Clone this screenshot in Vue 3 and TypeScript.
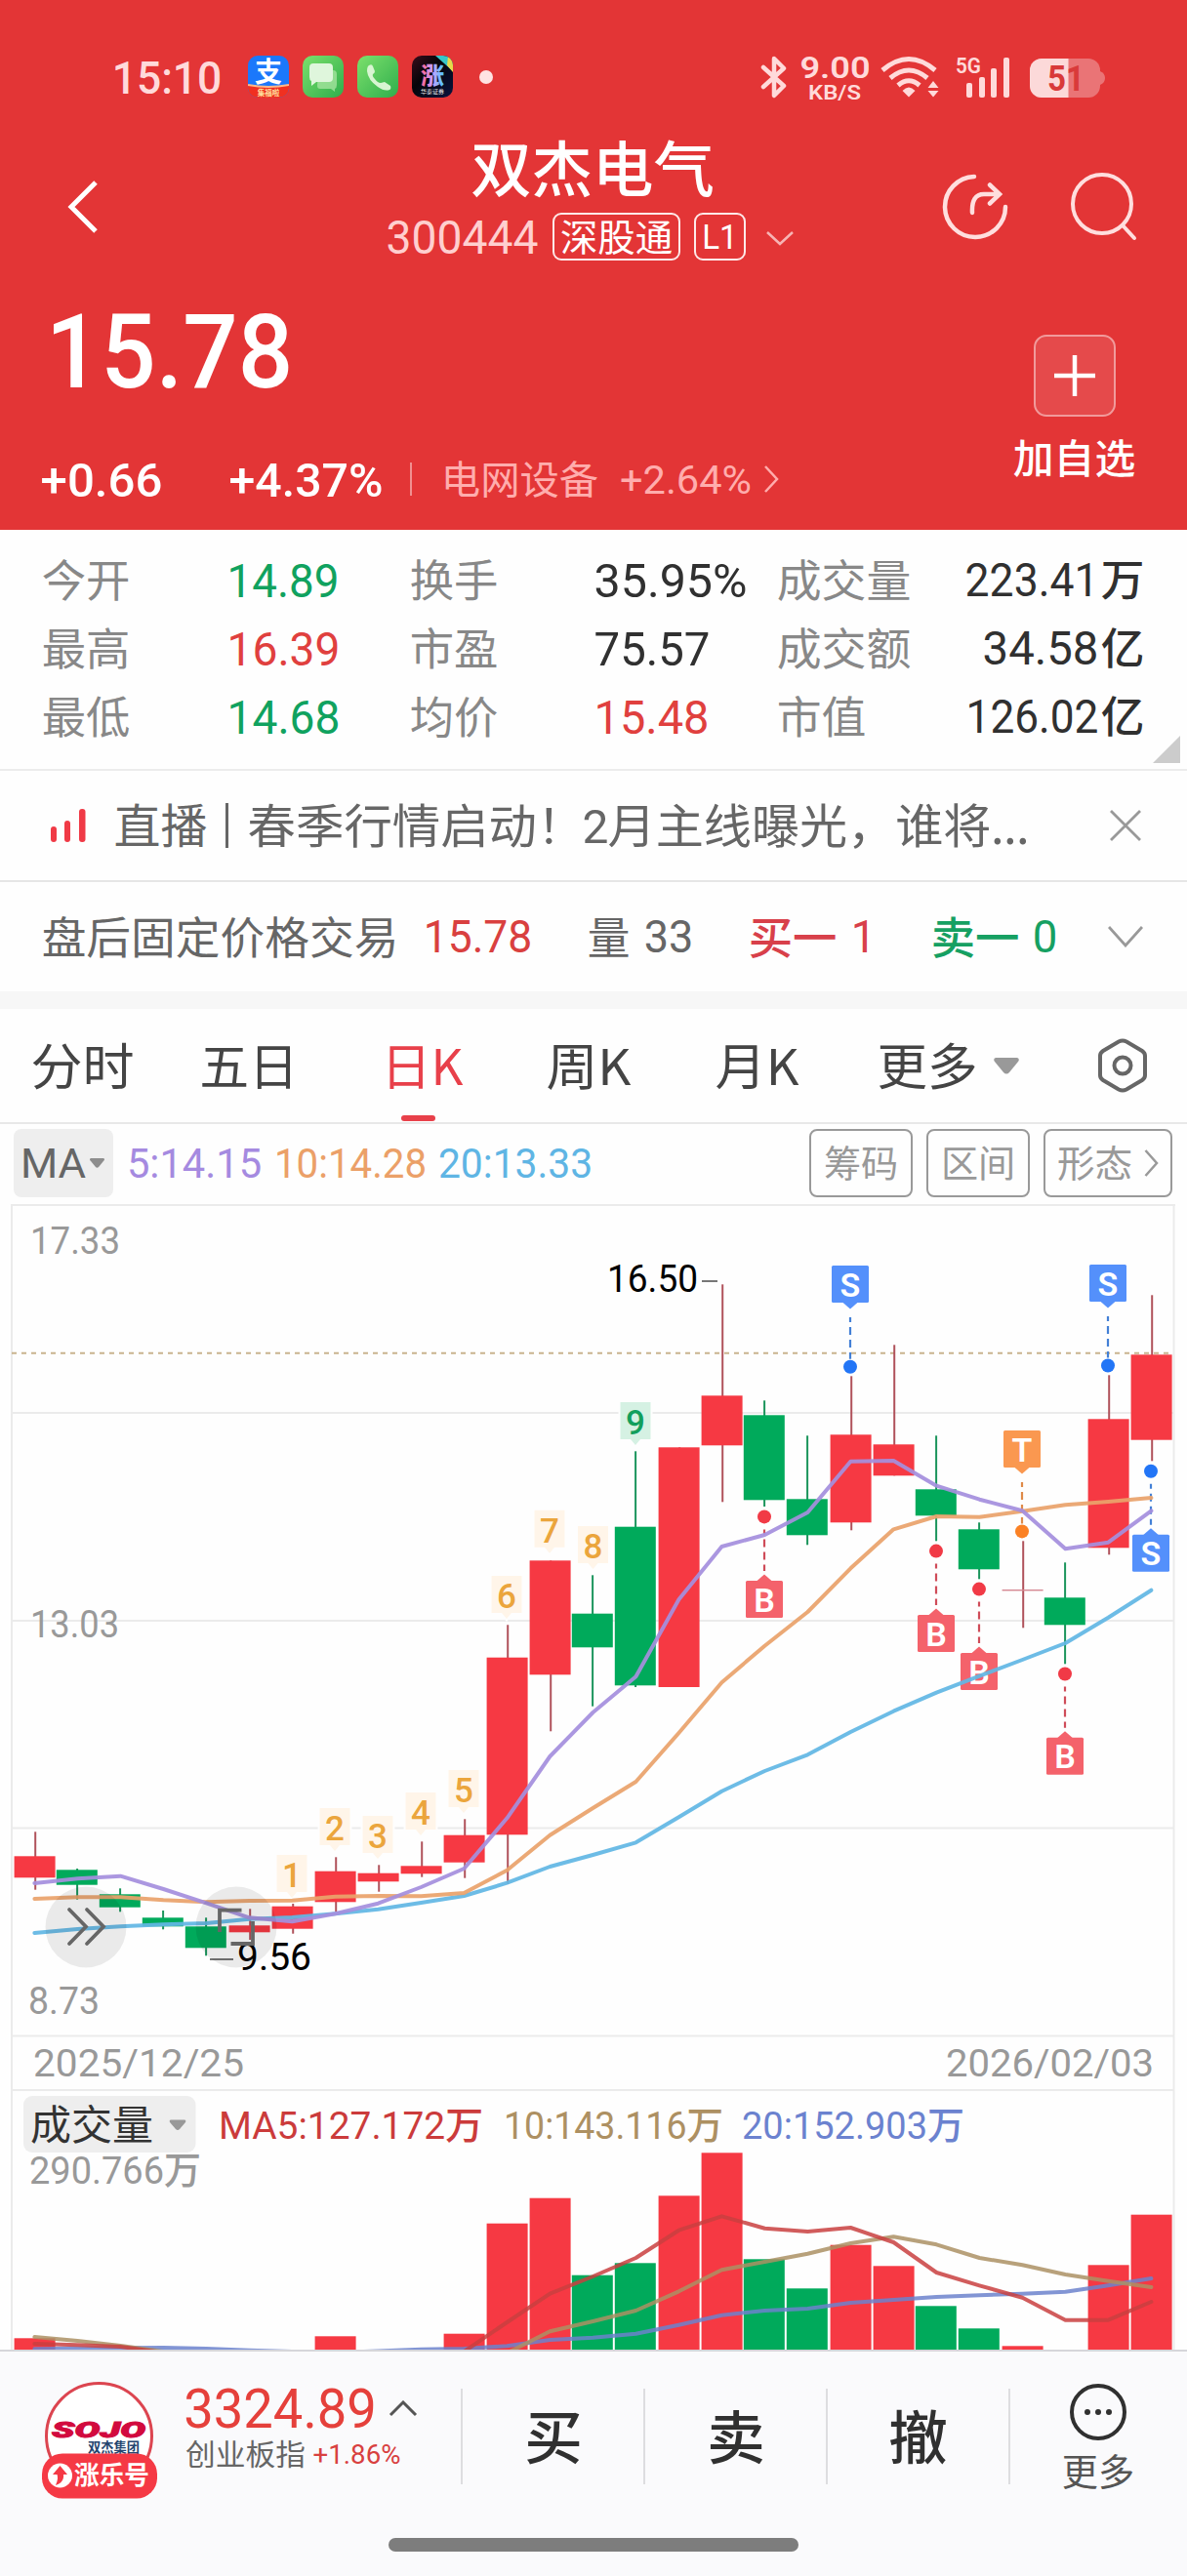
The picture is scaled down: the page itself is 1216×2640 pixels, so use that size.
<script setup lang="ts">
import { h } from 'vue'

interface FitProps {
  t: string
  w: number
  s: number
  gap?: number
  cjk?: boolean
  weight?: number
  color?: string
}

const NUM = 'Roboto, "Noto Sans CJK SC", sans-serif'
const CJK = '"Noto Sans CJK SC", sans-serif'

// One line of text whose ink is w pixels wide, centred on its own box.
const Fit = (p: FitProps) => {
  const pad = p.cjk ? 0.03 * p.s : 0.05 * p.s
  return h(
    'svg',
    {
      width: p.w,
      height: p.s,
      style: { marginLeft: `${p.gap ?? 0}px`, color: p.color, overflow: 'visible', flex: 'none', display: 'block' },
    },
    [
      h(
        'text',
        {
          x: -pad,
          y: p.s * (p.cjk ? 0.88 : 0.856),
          textLength: p.w + 2 * pad,
          lengthAdjust: 'spacingAndGlyphs',
          'font-size': p.s,
          'font-weight': p.weight ?? (p.cjk ? 400 : 450),
          'font-family': p.cjk ? CJK : NUM,
          fill: 'currentColor',
        },
        p.t,
      ),
    ],
  )
}
Fit.props = { t: String, w: Number, s: Number, gap: Number, cjk: Boolean, weight: Number, color: String }

const RED = '#e0403e'
const GREEN = '#10a25f'
const DARK = '#303030'

const stats = [
  [
    { l: '今开', v: '14.89', w: 110, c: GREEN },
    { l: '换手', v: '35.95%', w: 152, c: DARK },
    { l: '成交量', v: '223.41', w: 133, u: '万', c: DARK },
  ],
  [
    { l: '最高', v: '16.39', w: 111, c: RED },
    { l: '市盈', v: '75.57', w: 114, c: DARK },
    { l: '成交额', v: '34.58', w: 115, u: '亿', c: DARK },
  ],
  [
    { l: '最低', v: '14.68', w: 111, c: GREEN },
    { l: '均价', v: '15.48', w: 113, c: RED },
    { l: '市值', v: '126.02', w: 132, u: '亿', c: DARK },
  ],
]

// up/down, body top, body bottom, high, low, volume top
type Candle = [0 | 1, number, number, number, number, number]
const candles: Candle[] = [
  [1, 1902.3, 1924.3, 1877.3, 1936.7, 2396.3],
  [0, 1916.3, 1931.7, 1915, 1946.7, 2409],
  [0, 1941.3, 1954.7, 1935.3, 1959.3, 2409],
  [0, 1965.3, 1974.3, 1958, 1977.3, 2409],
  [0, 1974.3, 1996.3, 1965.3, 2004.3, 2409],
  [1, 1973.3, 1980.3, 1956.3, 1988, 2409],
  [1, 1953.7, 1976.7, 1951, 1981.7, 2409],
  [1, 1917.7, 1949.3, 1903.3, 1959.3, 2394.3],
  [1, 1919.7, 1928.3, 1911.3, 1938.7, 2409],
  [1, 1912.3, 1920.3, 1887.3, 1923.7, 2409],
  [1, 1880.7, 1908.7, 1864.3, 1924.7, 2391.7],
  [1, 1698.7, 1880.3, 1665.3, 1930.7, 2278.7],
  [1, 1599.3, 1716.3, 1599.3, 1774.3, 2252.7],
  [0, 1653.7, 1688.3, 1614.3, 1748.7, 2331.7],
  [0, 1564.7, 1727.3, 1487.3, 1729, 2319.3],
  [1, 1483.3, 1729, 1483.3, 1729, 2250.3],
  [1, 1430.3, 1481.3, 1316.3, 1539.3, 2206.3],
  [0, 1450.3, 1537.3, 1435.3, 1544, 2315.3],
  [0, 1536.3, 1573.3, 1471.3, 1583.3, 2345.3],
  [1, 1470.3, 1560.3, 1410.3, 1568.3, 2300.7],
  [1, 1480.3, 1512.3, 1378.3, 1512.3, 2322.3],
  [0, 1526.3, 1553.3, 1471.3, 1579.3, 2363.3],
  [0, 1567.3, 1608.3, 1560.3, 1618.3, 2386.3],
  [1, 1629, 1630.4, 1579.3, 1668.3, 2404.3],
  [0, 1637.3, 1665.3, 1601.3, 1705.3, 2409],
  [1, 1454.3, 1586.3, 1409.3, 1593.3, 2321.3],
  [1, 1388.3, 1475.7, 1327.3, 1497.3, 2269.7],
]
const cx = (i: number) => 35.6 + i * 44
const bars = candles.map(([up, top, bottom, high, low, vol], i) => ({
  x: cx(i) - (up ? 21 : 21.8),
  wick: cx(i) + (up ? 0.6 : -0.5),
  fill: up ? (bottom - top < 2 ? '#d58791' : '#f63943') : '#00aa5b',
  line: up ? '#b0525b' : '#1b955c',
  volFill: up ? '#f63943' : '#00aa5b',
  top, bottom, high, low, vol,
}))

const line = (ys: number[]) => ys.map((y, i) => `${cx(i) - 0.2},${y}`).join(' ')
const averages = [
  { c: '#62b7e4', p: line([1981, 1977, 1974.3, 1972.3, 1971, 1966.7, 1965, 1961.3, 1956.7, 1950, 1943, 1929.7, 1913, 1901, 1888.3, 1862.3, 1835.7, 1815, 1798.3, 1775, 1753.7, 1734.7, 1717.7, 1701, 1684, 1657.7, 1629.7]) },
  { c: '#e9a26c', p: line([1946, 1944.3, 1944.3, 1947.3, 1949.3, 1948, 1947.7, 1943.7, 1943, 1943.3, 1940, 1916.7, 1880.7, 1853, 1826, 1776, 1724.3, 1686.7, 1652, 1607.3, 1567.3, 1554, 1554.7, 1548.7, 1542.3, 1539, 1535]) },
  { c: '#a58fde', p: line([1930, 1925.3, 1922.7, 1936, 1950.3, 1965.3, 1969.3, 1961.3, 1950.7, 1934, 1915, 1863.3, 1800, 1755, 1718.3, 1639.3, 1585, 1573, 1550, 1497.7, 1497, 1522.7, 1536.7, 1548.3, 1587.3, 1580.7, 1548.3]) },
]
const volumeAverages = [
  { c: '#6c83cd', p: line([2407.3, 2406.7, 2406.3, 2406, 2407, 2408.7, 2410, 2411, 2409.5, 2407.7, 2407, 2404.3, 2398, 2395.7, 2391.7, 2382.7, 2372.7, 2368, 2366, 2360, 2357, 2354, 2352.3, 2350.7, 2348.7, 2342.3, 2335]) },
  { c: '#ab9064', p: line([2395, 2399, 2404, 2410, 2416, 2420, 2420, 2420, 2420, 2420, 2420, 2411.5, 2389.3, 2379, 2368, 2348.3, 2326.3, 2318, 2309.7, 2299, 2292.3, 2300.3, 2314, 2321.3, 2331, 2337.7, 2344]) },
  { c: '#c94040', p: line([2402, 2403.3, 2405, 2411, 2420, 2420, 2420, 2420, 2420, 2420, 2410, 2380, 2350.7, 2333, 2314, 2285.7, 2271.3, 2283.7, 2287, 2283, 2298, 2329, 2342.3, 2354.7, 2377.7, 2377.7, 2359]) },
]

const counts = [
  [299, 1901], [343, 1853], [387, 1861], [431, 1837], [475, 1814],
  [519, 1615], [563, 1547.7], [607.5, 1564], [651, 1437],
].map(([x, y], i) => ({ n: i + 1, x, y, bg: i === 8 ? '#d5f1e3' : '#fff5e9', fg: i === 8 ? '#129f5c' : '#eba53c' }))

// t: letter, x: centre, y: box top, d: dot centre
const marks = [
  { t: 'S', x: 871, y: 1297, d: 1400.7 },
  { t: 'S', x: 1135, y: 1296, d: 1399.5 },
  { t: 'S', x: 1179, y: 1572.7, d: 1507.7 },
  { t: 'T', x: 1047, y: 1466, d: 1569.4 },
  { t: 'B', x: 783, y: 1620, d: 1554.4 },
  { t: 'B', x: 959, y: 1655, d: 1589.6 },
  { t: 'B', x: 1003, y: 1694, d: 1628.6 },
  { t: 'B', x: 1091, y: 1780.7, d: 1715.5 },
].map((m) => {
  const below = m.d < m.y
  return {
    ...m,
    box: m.t === 'S' ? '#5490fb' : m.t === 'T' ? '#fa9850' : '#f4626b',
    dot: m.t === 'S' ? '#2275f6' : m.t === 'T' ? '#fb8124' : '#f13a46',
    dash: m.t === 'S' ? '#4380d6' : m.t === 'T' ? '#df8a48' : '#cf4c59',
    from: below ? m.d + 13 : m.y + 53,
    to: below ? m.y - 10 : m.d - 8,
    tip: below
      ? `M${m.x - 8} ${m.y + 0.5}L${m.x} ${m.y - 6.5}L${m.x + 8} ${m.y + 0.5}Z`
      : `M${m.x - 8} ${m.y + 37.5}L${m.x} ${m.y + 44.5}L${m.x + 8} ${m.y + 37.5}Z`,
  }
})

const axis = [
  { t: '17.33', x: 31, y: 1285, w: 92 },
  { t: '13.03', x: 31, y: 1678, w: 91 },
  { t: '8.73', x: 29, y: 2063.5, w: 73 },
  { t: '2025/12/25', x: 34, y: 2128, w: 216 },
  { t: '2026/02/03', x: 969, y: 2128, w: 213 },
  { t: '290.766万', x: 30, y: 2238, w: 176 },
]
</script>

<template>
  <div class="page">
    <header class="head">
      <div class="status">
        <Fit class="time" t="15:10" :w="108" :s="47" :weight="500" />
        <svg class="apps" width="210" height="44" viewBox="0 0 210 44">
          <defs>
            <linearGradient id="gr" x1="0" y1="0" x2="1" y2="1"><stop offset="0" stop-color="#7ce06c" /><stop offset="1" stop-color="#2fae4c" /></linearGradient>
            <linearGradient id="zh" x1="0" y1="0" x2="1" y2="0"><stop offset="0" stop-color="#ff5e8e" /><stop offset=".5" stop-color="#c8a0ff" /><stop offset="1" stop-color="#49c8ff" /></linearGradient>
            <linearGradient id="bk" x1="0" y1="0" x2="1" y2="1"><stop offset="0" stop-color="#3a0d1c" /><stop offset=".4" stop-color="#050509" /><stop offset="1" stop-color="#0a1440" /></linearGradient>
            <clipPath id="a1"><rect width="42" height="43" rx="10" /></clipPath>
            <clipPath id="a4"><rect x="168" width="42" height="43" rx="10" /></clipPath>
          </defs>
          <g clip-path="url(#a1)">
            <rect width="42" height="43" fill="#1b78fb" />
            <text x="21" y="27" font-size="28" font-weight="700" text-anchor="middle" fill="#fff" class="cjk">支</text>
            <path d="M0 30Q21 34 42 30V43H0Z" fill="#f03020" /><path d="M0 30Q21 34 42 30" stroke="#ffb98a" stroke-width="2" fill="none" />
            <text x="21" y="41" font-size="7.5" font-weight="700" text-anchor="middle" fill="#ffe2a0" class="cjk">集福啦</text>
          </g>
          <rect x="56" width="42" height="43" rx="10" fill="url(#gr)" />
          <path d="M72 15h15q4 0 4 4v11q0 3-2 4l0 3-4-3H74q-3 0-3-3Z" fill="#a9e5a3" opacity=".75" />
          <path d="M67 8h16q4 0 4 4v11q0 4-4 4H70l-5 4v-5q-2-1-2-4V12q0-4 4-4Z" fill="#dff6dc" />
          <rect x="112" width="42" height="43" rx="10" fill="url(#gr)" />
          <path d="M124 10q3-2 4 1l2 5q0 2-2 3-1 2 2 5 3 4 6 4l4-1 6 4q1 3-1 4-5 2-12-3-10-7-11-16 0-5 2-6Z" fill="#d8f5d2" />
          <g clip-path="url(#a4)">
            <rect x="168" width="42" height="43" fill="url(#bk)" />
            <path d="M192 0h18v16Z" fill="#36c7c9" /><path d="M205 0h5v17l-6-7Z" fill="#e7d94a" />
            <text x="189" y="29" font-size="24" font-weight="900" text-anchor="middle" fill="url(#zh)" class="cjk">涨</text>
            <text x="189" y="39" font-size="6" text-anchor="middle" fill="#eee" class="cjk">华泰证券</text>
          </g>
        </svg>
        <i class="dot"></i>
        <svg class="bt" width="28" height="44" viewBox="0 0 28 44" fill="none" stroke="#ffdada" stroke-width="4.5" stroke-linejoin="round" stroke-linecap="round">
          <path d="M3 12L24 31 14 41V3L24 13 3 32" />
        </svg>
        <div class="speed">
          <Fit t="9.00" :w="69" :s="32" :weight="600" />
          <Fit t="KB/S" :w="52" :s="20" :weight="600" />
        </div>
        <svg class="wifi" width="60" height="42" viewBox="0 0 60 42" fill="none" stroke="#ffdada" stroke-width="5">
          <path d="M2 14Q29-9 56 14M10 22Q29 6 48 22M18 29.500Q29 20 40 29.500" />
          <path d="M22.500 35Q29 28 35.500 35L29 41.500Z" fill="#ffdada" stroke="none" />
          <path d="M48.500 32h11L54 25ZM48.500 35h11L54 41.500Z" fill="#ffdada" stroke="none" />
        </svg>
        <svg class="cell" width="56" height="43" viewBox="0 0 56 43" fill="#ffdada">
          <text x="0" y="17" font-size="22" font-weight="600" textLength="26" lengthAdjust="spacingAndGlyphs" class="num">5G</text>
          <rect x="11" y="27" width="6" height="15" rx="2" /><rect x="24" y="21" width="6" height="21" rx="2" />
          <rect x="36" y="12" width="6" height="30" rx="2" /><rect x="49" y="1" width="6" height="41" rx="2" />
        </svg>
        <svg class="batt" width="78" height="40" viewBox="0 0 78 40">
          <defs><clipPath id="bl"><rect width="39.500" height="40" /></clipPath></defs>
          <rect width="72" height="40" rx="12" fill="#ea7476" /><path d="M72 13q5 2 5 7t-5 7Z" fill="#ea7476" />
          <rect width="72" height="40" rx="12" fill="#fcd9d9" clip-path="url(#bl)" />
          <text x="18" y="33" font-size="36" font-weight="700" textLength="38" lengthAdjust="spacingAndGlyphs" fill="#d93a3a" class="num">51</text>
        </svg>
      </div>

      <div class="nav">
        <svg class="back" width="32" height="56" viewBox="0 0 32 56"><path d="M29 3L4 28 29 53" /></svg>
        <div class="title">
          <Fit class="name" t="双杰电气" :w="246" :s="62" :weight="500" cjk :gap="86" />
          <div class="sub">
            <Fit t="300444" :w="151" :s="48" color="#ffcfcf" />
            <div class="tag t1"><Fit t="深股通" :w="113" :s="38" cjk /></div>
            <div class="tag t2"><Fit t="L1" :w="33" :s="35" /></div>
            <svg class="down" width="30" height="16" viewBox="0 0 30 16"><path d="M2 2L15 14 28 2" /></svg>
          </div>
        </div>
        <svg class="share" width="70" height="70" viewBox="0 0 70 70">
          <path d="M34 4A31 31 0 1 0 66 35" /><path d="M32 41Q31 22 44 22H58M50 12.500L60 22 50 31.500" />
        </svg>
        <svg class="find" width="70" height="70" viewBox="0 0 70 70"><circle cx="33" cy="32" r="30" /><path d="M55 55L66 67" /></svg>
      </div>

      <div class="price">
        <div class="left">
          <Fit t="15.78" :w="243" :s="105" :weight="500" :gap="8" />
          <div class="chg">
            <Fit t="+0.66" :w="120" :s="49" :weight="500" />
            <Fit t="+4.37%" :w="153" :s="49" :weight="500" :gap="73" />
            <i class="sep"></i>
            <Fit t="电网设备" :w="159" :s="40" cjk :gap="31" color="#ffadad" />
            <Fit t="+2.64%" :w="131" :s="41" :gap="25" color="#ffadad" />
            <svg class="go" width="16" height="30" viewBox="0 0 16 30"><path d="M2 2L14 15 2 28" /></svg>
          </div>
        </div>
        <div class="add">
          <div class="plus"><svg width="44" height="44" viewBox="0 0 44 44"><path d="M22 1V43M1 22H43" stroke="#fff" stroke-width="4.500" /></svg></div>
          <Fit t="加自选" :w="123" :s="41" cjk :weight="500" />
        </div>
      </div>
    </header>

    <section class="stats">
      <div v-for="(row, r) in stats" :key="r" class="srow">
        <template v-for="(c, i) in row" :key="i">
          <div v-if="i < 2" class="cell2">
            <Fit :t="c.l" :w="88" :s="45" cjk color="#888" />
            <Fit :t="c.v" :w="c.w" :s="49" :color="c.c" />
          </div>
          <div v-else class="cell3">
            <Fit :t="c.l" :w="c.l.length * 46 - 3" :s="45" cjk color="#888" />
            <Fit class="push" :t="c.v" :w="c.w - 1" :s="48" :color="c.c" />
            <Fit :t="c.u!" :w="42" :s="44" cjk :weight="500" :color="c.c" :gap="6" />
          </div>
        </template>
      </div>
      <i class="corner"></i>
    </section>

    <section class="live">
      <svg width="38" height="36" viewBox="0 0 38 36" fill="#f03a46"><rect x="1" y="19" width="6" height="16" rx="3" /><rect x="15" y="13" width="6" height="22" rx="3" /><rect x="30" y="1" width="6.500" height="34" rx="3" /></svg>
      <Fit t="直播" :w="93" :s="48" cjk :gap="29" />
      <i class="bar"></i>
      <Fit t="春季行情启动！" :w="343" :s="48" cjk :gap="21" />
      <Fit t="2" :w="22" :s="49" :gap="1" />
      <Fit t="月主线曝光，谁将" :w="390" :s="48" cjk :gap="3" />
      <Fit t="..." :w="34" :s="52" :gap="4" :weight="500" />
      <svg class="x" width="32" height="32" viewBox="0 0 32 32"><path d="M1 1L31 31M31 1L1 31" /></svg>
    </section>

    <section class="after">
      <Fit t="盘后固定价格交易" :w="363" :s="45" cjk />
      <Fit t="15.78" :w="107" :s="46" :gap="29" color="#d9403f" />
      <Fit t="量" :w="41" :s="45" cjk :gap="60" />
      <Fit t="33" :w="46" :s="46" :gap="18" />
      <Fit t="买一" :w="88" :s="45" cjk :gap="60" :weight="500" color="#d8404a" />
      <Fit t="1" :w="21" :s="46" :gap="18" color="#d8404a" />
      <Fit t="卖一" :w="88" :s="45" cjk :gap="60" :weight="500" color="#16a062" />
      <Fit t="0" :w="21" :s="46" :gap="17" color="#16a062" />
      <svg class="x v" width="36" height="22" viewBox="0 0 36 22"><path d="M1 1L18 20 35 1" /></svg>
    </section>

    <nav class="tabs">
      <Fit t="分时" :w="103" :s="51" cjk />
      <Fit t="五日" :w="98" :s="51" cjk :gap="70" />
      <div class="on"><Fit t="日K" :w="81" :s="51" cjk /></div>
      <Fit t="周K" :w="84" :s="51" cjk :gap="88" />
      <Fit t="月K" :w="83" :s="51" cjk :gap="89" />
      <Fit t="更多" :w="100" :s="51" cjk :gap="83" />
      <svg class="tri" width="26" height="17" viewBox="0 0 26 17"><path d="M2 0H24Q27 1 25 4L16 15Q13 18 10 15L1 4Q-1 1 2 0Z" /></svg>
      <svg class="hex" width="52" height="56" viewBox="0 0 52 56"><path d="M22 3.500Q26 1.500 30 3.500L46 13Q49 15 49 18V38Q49 41 46 43L30 52.500Q26 54.500 22 52.500L6 43Q3 41 3 38V18Q3 15 6 13Z" /><circle cx="26" cy="28" r="8.500" /></svg>
    </nav>

    <div class="ma">
      <div class="mabox"><Fit t="MA" :w="63" :s="42" /><svg width="17" height="10" viewBox="0 0 26 17" fill="#8d8d8d"><path d="M2 0H24Q27 1 25 4L16 15Q13 18 10 15L1 4Q-1 1 2 0Z" /></svg></div>
      <Fit t="5:14.15" :w="134" :s="42" :gap="16" color="#a58ae0" />
      <Fit t="10:14.28" :w="152" :s="42" :gap="17" color="#eba068" />
      <Fit t="20:13.33" :w="154" :s="42" :gap="16" color="#5fb5e4" />
      <div class="btns">
        <div class="btn"><Fit t="筹码" :w="74" :s="38" cjk /></div>
        <div class="btn"><Fit t="区间" :w="74" :s="38" cjk /></div>
        <div class="btn wide"><Fit t="形态" :w="75" :s="38" cjk /><svg width="15" height="28" viewBox="0 0 15 28"><path d="M1.500 1L13 14 1.500 27" fill="none" stroke="#999" stroke-width="2.500" /></svg></div>
      </div>
    </div>

    <svg class="chart" width="1216" height="1180" viewBox="0 1228 1216 1180">
      <g stroke="#ebebeb" stroke-width="2">
        <path d="M11 1235H1204M12 1448H1202M12 1661H1202M12 1873.600H1202M12 2086.600H1202M12 2142H1202M12 1235V2408M1202.500 1235V2408" fill="none" />
      </g>
      <path d="M12 1386.700H1202" stroke="#c9b48f" stroke-width="2" stroke-dasharray="5 5" />
      <g font-size="39" font-weight="450" fill="#999" class="num">
        <text v-for="a in axis" :key="a.t" :x="a.x" :y="a.y" :textLength="a.w" lengthAdjust="spacingAndGlyphs">{{ a.t }}</text>
      </g>

      <g v-for="(b, i) in bars" :key="i">
        <path :d="`M${b.wick} ${b.high}V${b.low}`" :stroke="b.line" stroke-width="2" />
        <rect :x="b.x" :y="b.top" width="42" :height="b.bottom - b.top" :fill="b.fill" />
        <rect :x="b.x" :y="b.vol" width="42" :height="2410 - b.vol" :fill="b.volFill" />
      </g>

      <g v-for="c in counts" :key="c.n">
        <path :d="`M${c.x - 15.5} ${c.y}h31v38h-10.500l-5 6-5-6h-10.500Z`" :fill="c.bg" stroke="#fefefe" stroke-width="4" paint-order="stroke" />
        <text :x="c.x" :y="c.y + 33" font-size="35" font-weight="500" text-anchor="middle" :fill="c.fg" class="num">{{ c.n }}</text>
      </g>

      <g v-for="(m, i) in marks" :key="'m' + i">
        <path :d="`M${m.x} ${m.from}V${m.to}`" :stroke="m.dash" stroke-width="2.200" stroke-dasharray="8 5" stroke-dashoffset="3" />
        <circle :cx="m.x" :cy="m.d" r="7" :fill="m.dot" />
        <path :d="m.tip" :fill="m.box" />
        <rect :x="m.x - 19" :y="m.y" width="38" height="38" rx="1.500" :fill="m.box" />
        <text :x="m.x" :y="m.y + 31.5" font-size="34" font-weight="600" text-anchor="middle" fill="#fff" class="num">{{ m.t }}</text>
      </g>

      <g fill="none" stroke-width="4" stroke-linecap="round" stroke-linejoin="round">
        <polyline v-for="a in averages" :key="a.c" :points="a.p" :stroke="a.c" stroke-opacity=".93" />
        <polyline v-for="a in volumeAverages" :key="a.c" :points="a.p" :stroke="a.c" stroke-opacity=".85" />
      </g>

      <path d="M719 1313H735M215 2008H239" stroke="#777" stroke-width="2" />
      <g font-size="39" font-weight="450" fill="#000" class="num">
        <text x="622" y="1323.500" textLength="93" lengthAdjust="spacingAndGlyphs">16.50</text>
        <text x="243" y="2019" textLength="76" lengthAdjust="spacingAndGlyphs">9.56</text>
      </g>
      <g fill="#000" fill-opacity=".08"><circle cx="88" cy="1975" r="41.500" /><circle cx="242" cy="1975" r="41.500" /></g>
      <g fill="none" stroke="#666" stroke-width="3.800">
        <path d="M71 1957L88 1974.500 71 1992M89 1957L106 1974.500 89 1992" stroke-linecap="round" />
        <path d="M225 1980V1957.700H247.500M259 1969V1992H236.500" />
      </g>

      <rect x="24" y="2148" width="176.500" height="58" rx="9" fill="#eee" />
      <text x="31" y="2193" font-size="42" textLength="126" lengthAdjust="spacingAndGlyphs" fill="#333" class="cjk">成交量</text>
      <path d="M175 2172.500H189Q191 2173 190 2175L184 2182Q182 2184 180 2182L174 2175Q173 2173 175 2172.500Z" fill="#999" />
      <g font-size="39" font-weight="450" class="num">
        <text x="224" y="2192" textLength="271" lengthAdjust="spacingAndGlyphs" fill="#cb3b3b">MA5:127.172万</text>
        <text x="516" y="2192" textLength="225" lengthAdjust="spacingAndGlyphs" fill="#ad9062">10:143.116万</text>
        <text x="760" y="2192" textLength="228" lengthAdjust="spacingAndGlyphs" fill="#6b82cf">20:152.903万</text>
      </g>
    </svg>

    <footer class="foot">
      <div class="actions">
        <svg class="logo" width="120" height="122" viewBox="0 0 120 122">
          <circle cx="58.500" cy="56.500" r="54" fill="#fff" stroke="#dc4550" stroke-width="3" />
          <text x="10" y="58" font-size="22" font-weight="900" font-style="italic" textLength="96" lengthAdjust="spacingAndGlyphs" fill="#d20a3e" class="num" stroke="#d20a3e">SOJO</text>
          <text x="47" y="72.500" font-size="13.500" font-weight="700" textLength="53" lengthAdjust="spacingAndGlyphs" fill="#24456f" class="cjk">双杰集团</text>
          <rect x="0" y="74.500" width="118" height="46" rx="21" fill="#f53945" />
          <circle cx="18.500" cy="97" r="12.500" fill="#fff" />
          <path d="M18.500 87L11 96H15.500Q17 101 14 107 23 104 22 96H26Z" fill="#f53945" />
          <text x="33" y="106" font-size="26" font-weight="700" textLength="77" lengthAdjust="spacingAndGlyphs" fill="#fff" class="cjk">涨乐号</text>
        </svg>
        <div class="index">
          <div class="irow"><Fit t="3324.89" :w="192" :s="56" color="#e5403b" /><svg class="up" width="30" height="17" viewBox="0 0 30 17"><path d="M2 15L15 2 28 15" /></svg></div>
          <div class="irow"><Fit t="创业板指" :w="121" :s="30" cjk color="#666" /><Fit t="+1.86%" :w="87" :s="28" :gap="10" color="#d8403f" /></div>
        </div>
        <div class="act"><Fit t="买" :w="56" :s="59" cjk :weight="500" /></div>
        <div class="act"><Fit t="卖" :w="56" :s="59" cjk :weight="500" /></div>
        <div class="act"><Fit t="撤" :w="57" :s="59" cjk :weight="500" /></div>
        <div class="act more">
          <svg width="58" height="58" viewBox="0 0 58 58"><circle cx="29" cy="29" r="27" fill="none" stroke="#303030" stroke-width="4" /><g fill="#303030"><circle cx="18" cy="29" r="3" /><circle cx="29" cy="29" r="3" /><circle cx="40" cy="29" r="3" /></g></svg>
          <Fit t="更多" :w="72" :s="38" cjk color="#555" />
        </div>
      </div>
      <i class="home"></i>
    </footer>
  </div>
</template>

<style>
body {
  margin: 0;
  background: #fefefe;
}
</style>

<style scoped>
.page {
  width: 1216px;
  height: 2640px;
  overflow: hidden;
  background: #fefefe;
  font-family: Roboto, "Noto Sans CJK SC", sans-serif;
}
.page * { box-sizing: border-box; }
svg { display: block; flex: none; }
i { display: block; flex: none; }
.num { font-family: Roboto, "Noto Sans CJK SC", sans-serif; }
.cjk { font-family: "Noto Sans CJK SC", sans-serif; }

.head { height: 543px; background: #e33536; color: #fff; }
.status { display: flex; align-items: center; height: 142px; padding: 16px 0 0 117px; color: #ffdada; }
.apps { margin-left: 29px; overflow: visible; }
.dot { width: 14px; height: 14px; margin-left: 27px; border-radius: 50%; background: #ffe2e2; }
.bt { margin-left: 274px; }
.speed { display: flex; flex-direction: column; align-items: center; width: 70px; height: 54px; margin-left: 13px; padding-top: 1px; }
.wifi { margin-left: 12px; overflow: visible; }
.cell { margin-left: 17px; overflow: visible; }
.batt { margin-left: 20px; margin-top: 1px; overflow: visible; }

.nav { display: flex; align-items: center; height: 140px; padding-left: 69px; }
.back path { fill: none; stroke: #fff; stroke-width: 5; }
.title { width: 566px; margin: -15px 0 0 297px; }
.sub { display: flex; align-items: center; height: 50px; margin-top: 14px; }
.tag { display: flex; align-items: center; justify-content: center; height: 49px; border: 2px solid #ffe9e9; border-radius: 9px; }
.t1 { width: 131px; margin-left: 17px; }
.t2 { width: 53px; margin-left: 14px; }
.down { margin: 2px 0 0 20px; }
.down path { fill: none; stroke: #f7b4b4; stroke-width: 2.5; }
.share path, .find circle, .find path { fill: none; stroke: #ffdede; stroke-width: 4.5; stroke-linecap: round; }
.find { margin-left: 62px; }
.find circle, .find path { stroke-width: 4; }

.price { display: flex; }
.left { width: 1039px; padding: 25px 0 0 44px; }
.chg { display: flex; align-items: center; height: 50px; margin-top: 54px; }
.sep { width: 2px; height: 34px; margin-left: 30px; background: #f19090; }
.go { margin-left: 14px; }
.go path { fill: none; stroke: #ffadad; stroke-width: 2.5; }
.add { display: flex; flex-direction: column; align-items: center; gap: 22px; width: 123px; padding-top: 61px; }
.plus { display: flex; align-items: center; justify-content: center; width: 84px; height: 84px; border: 2px solid #f19a9b; border-radius: 13px; background: #e54a4b; }

.stats { position: relative; height: 247px; padding: 16px 0 0 44px; border-bottom: 2px solid #ececec; }
.srow { display: flex; height: 70px; align-items: center; }
.cell2 { display: grid; grid-template-columns: 191px 186px; align-items: center; }
.cell2 + .cell2 { grid-template-columns: 190px 186px; }
.cell3 { display: flex; align-items: center; width: 374px; }
.cell3 .push { margin-left: auto !important; }
.corner { position: absolute; right: 7px; bottom: 6px; border-left: 28px solid transparent; border-bottom: 28px solid #ccc; }

.live { display: flex; align-items: center; height: 114px; padding-left: 51px; border-bottom: 2px solid #e6e6e6; color: #666; }
.live .bar { width: 3px; height: 46px; margin-left: 20px; background: #666; }
.x { margin-left: auto; margin-right: 47px; }
.x path { fill: none; stroke: #999; stroke-width: 2.8; }
.x.v { margin-right: 45px; }
.after { display: flex; align-items: center; height: 112px; padding-left: 44px; color: #666; }

.tabs { display: flex; align-items: center; height: 136px; padding-left: 33px; border-top: 18px solid #f7f7f7; border-bottom: 2px solid #e8e8e8; color: #444; }
.on { position: relative; display: flex; align-items: center; height: 116px; margin-left: 88px; color: #e8404a; }
.on::after { content: ""; position: absolute; left: 19px; bottom: 1px; width: 35px; height: 6px; border-radius: 3px; background: #e8404a; }
.tri { margin-left: 18px; fill: #999; }
.hex { margin-left: 80px; }
.hex path, .hex circle { fill: none; stroke: #666; stroke-width: 4; }

.ma { display: flex; align-items: center; height: 76px; padding: 4px 15px 0 14px; }
.mabox { display: flex; align-items: center; gap: 5px; width: 102px; height: 70px; padding-left: 9px; border-radius: 8px; background: #eee; color: #666; }
.btns { display: flex; gap: 14px; margin-left: auto; color: #999; }
.btn { display: flex; align-items: center; justify-content: center; width: 106px; height: 70px; border: 2px solid #999; border-radius: 8px; }
.btn.wide { width: 132px; gap: 13px; }

.chart { overflow: hidden; }

.foot { height: 232px; border-top: 2px solid #d6d6da; background: #fafafc; }
.actions { display: flex; align-items: flex-start; height: 191px; padding: 30px 0 0 43px; }
.index { width: 309px; padding: 0 0 0 28px; }
.irow { display: flex; align-items: center; }
.irow + .irow { margin-top: 4px; }
.up { margin-left: 15px; }
.up path { fill: none; stroke: #555; stroke-width: 3; }
.act { display: flex; align-items: center; justify-content: center; width: 187px; height: 98px; margin-top: 8px; border-left: 2px solid #dddde0; color: #303030; }
.act.more { flex-direction: column; gap: 13px; width: 182px; }
.home { width: 420px; height: 14px; margin-left: 398px; border-radius: 7px; background: #7d7d7d; }
</style>
